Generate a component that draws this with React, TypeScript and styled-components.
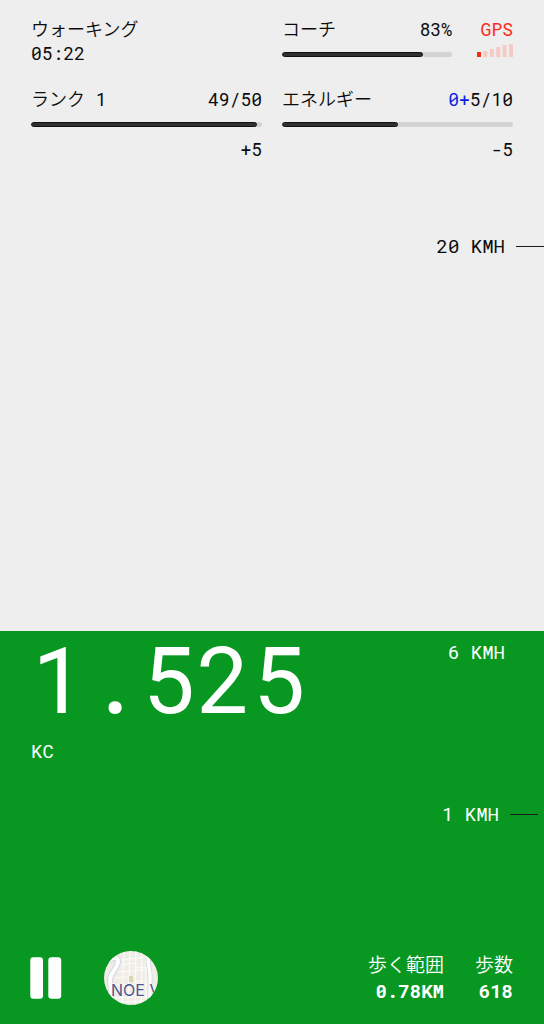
import React from 'react';
import styled, { createGlobalStyle } from 'styled-components';

const mono = "'Roboto Mono', 'DejaVu Sans Mono', 'Noto Sans CJK JP', monospace";

const GlobalStyle = createGlobalStyle`
  *, *::before, *::after { box-sizing: border-box; }
  body {
    margin: 0;
    background: #eeeeee;
    color: #0c0c0c;
    font-family: ${mono};
    font-size: 18px;
    line-height: 24px;
  }
`;

const Screen = styled.main`
  display: flex;
  flex-direction: column;
  min-height: 100vh;
`;

const Upper = styled.section`
  flex: 631 0 0;
  display: flex;
  flex-direction: column;
`;

const Stats = styled.header`
  display: grid;
  grid-template-columns: 1fr 1fr;
  column-gap: 20px;
  row-gap: 22px;
  padding: 17px 31px 0;
`;

const Cell = styled.div`
  display: flex;
  flex-direction: column;
  min-width: 0;
`;

const Split = styled.div`
  display: flex;
  gap: 24px;
`;

const Coach = styled(Cell)`
  flex: 1;
`;

const Row = styled.div`
  display: flex;
  justify-content: space-between;
  white-space: pre;
`;

const Label = styled.span`
  font-weight: 350;
`;

const Level = styled.span`
  font-weight: 400;
`;

const Bonus = styled.span`
  color: #0a1fe0;
`;

const Delta = styled.div`
  margin-top: 10px;
  text-align: right;
`;

const Track = styled.div`
  height: 5px;
  margin-top: 11px;
  border-radius: 3px;
  background: #d3d3d5;
  overflow: hidden;
`;

const Fill = styled.div`
  height: 5px;
  border: 1px solid #121212;
  border-radius: 3px;
  background: #303030;
`;

const Gps = styled.div`
  display: flex;
  flex-direction: column;
  align-items: flex-end;
  color: #fb2a1c;

  svg { display: block; margin-top: 2px; }
`;

const Mark = styled.div<{ $top?: number; $end?: number; $light?: boolean }>`
  display: flex;
  align-items: center;
  justify-content: flex-end;
  gap: 11px;
  margin-top: ${(p) => p.$top ?? 0}px;
  padding-right: ${(p) => p.$end ?? 0}px;
  color: ${(p) => (p.$light ? '#ffffff' : '#0c0c0c')};
  font-size: 19px;
  white-space: nowrap;
`;

const Tick = styled.span`
  width: 28px;
  height: 1px;
  background: #1a1a1a;
`;

const Lower = styled.section`
  flex: 393 0 0;
  display: flex;
  flex-direction: column;
  justify-content: space-between;
  background: #089821;
  color: #ffffff;
  font-size: 19px;
`;

const Reading = styled.div`
  display: flex;
  justify-content: space-between;
  padding: 9px 0 0 31px;
`;

const Energy = styled.div`
  display: flex;
  flex-direction: column;
`;

const Big = styled.strong`
  font-size: 92px;
  line-height: 76px;
  font-weight: 400;
`;

const Unit = styled.span`
  margin-top: 23px;
`;

const Footer = styled.footer`
  display: flex;
  align-items: center;
  padding: 0 31px 19px 30px;
`;

const IconButton = styled.button`
  display: block;
  padding: 0;
  border: 0;
  background: none;
  cursor: pointer;

  svg { display: block; }
  & + & { margin-left: 42px; }
`;

const Totals = styled.dl`
  display: flex;
  gap: 31px;
  margin: 0 0 0 auto;
  text-align: right;

  dt { font-weight: 350; line-height: 26px; }
  dd { margin: 0; font-weight: 700; line-height: 26px; }
`;

function Bar({ value, label }: { value: number; label: string }) {
  return (
    <Track role="progressbar" aria-label={label} aria-valuenow={value}>
      <Fill style={{ width: `${value}%` }} />
    </Track>
  );
}

function Signal() {
  const bars = [5, 6, 8, 10, 12, 13];
  return (
    <svg width="37" height="14" viewBox="0 0 37 14" aria-hidden="true">
      {bars.map((h, i) => (
        <rect key={i} x={1 + i * 6.4} y={14 - h} width="4" height={h} fill={i === 0 ? '#fb2a10' : '#f4cbc4'} />
      ))}
    </svg>
  );
}

function PauseIcon() {
  return (
    <svg width="32" height="42" viewBox="0 0 32 42" aria-hidden="true">
      <rect x="0.3" y="0.3" width="12.7" height="41.4" rx="3" fill="#fff" />
      <rect x="18.3" y="0.3" width="12.9" height="41.4" rx="3" fill="#fff" />
    </svg>
  );
}

function MapIcon() {
  const leftRoad = 'M4 11C8 6 14 5 14 10 14 17 7 21 6 28L8 56';
  const rightRoad = 'M43 0 46 24 46 56';
  return (
    <svg width="54" height="54" viewBox="0 0 54 54" aria-hidden="true">
      <defs>
        <clipPath id="round"><circle cx="27" cy="27" r="27" /></clipPath>
      </defs>
      <g clipPath="url(#round)">
        <rect width="54" height="54" fill="#f0ede6" />
        <g stroke="#fcfbf9" strokeWidth="1.2" fill="none">
          <path d="M20 0 18 54M26 0 24 54M32 0 31 54M38 0 37 54M42 8 42 54" />
          <path d="M15 9 44 6M17 14 32 12M32 17 44 16M14 21 44 19M11 27 31 25M31 31 45 29M9 34 45 33M8 47 54 45M8 51 44 50" />
        </g>
        <rect x="25" y="25" width="4" height="6" fill="#ddd6b2" />
        <g fill="none" strokeLinejoin="round">
          <path d={leftRoad} stroke="#d4d6e6" strokeWidth="6" />
          <path d={leftRoad} stroke="#fdfdfe" strokeWidth="4" />
          <path d={rightRoad} stroke="#d4d6e6" strokeWidth="5" />
          <path d={rightRoad} stroke="#fdfdfe" strokeWidth="3.4" />
        </g>
        <text x="7" y="45" fontFamily="Inter, sans-serif" fontSize="16" fill="#4d558f" stroke="#f6f5f3" strokeWidth="1.5" paintOrder="stroke">
          NOE V
        </text>
      </g>
    </svg>
  );
}

export default function App() {
  return (
    <>
      <GlobalStyle />
      <Screen lang="ja">
        <Upper>
          <Stats>
            <Cell>
              <Label>ウォーキング</Label>
              <time>05:22</time>
            </Cell>
            <Split>
              <Coach>
                <Row><Label>コーチ</Label><span>83%</span></Row>
                <Bar value={83} label="コーチ" />
              </Coach>
              <Gps><span>GPS</span><Signal /></Gps>
            </Split>
            <Cell>
              <Row><Label>ランク <Level>1</Level></Label><span>49/50</span></Row>
              <Bar value={98} label="ランク" />
              <Delta>+5</Delta>
            </Cell>
            <Cell>
              <Row><Label>エネルギー</Label><span><Bonus>0+</Bonus>5/10</span></Row>
              <Bar value={50} label="エネルギー" />
              <Delta>-5</Delta>
            </Cell>
          </Stats>
          <Mark $top={73}>20 KMH<Tick /></Mark>
        </Upper>
        <Lower>
          <Reading>
            <Energy>
              <Big>1.525</Big>
              <Unit>KC</Unit>
            </Energy>
            <div>
              <Mark $light $end={39}>6 KMH</Mark>
              <Mark $light $top={138} $end={6}>1 KMH<Tick /></Mark>
            </div>
          </Reading>
          <Footer>
            <IconButton type="button" aria-label="一時停止"><PauseIcon /></IconButton>
            <IconButton type="button" aria-label="地図"><MapIcon /></IconButton>
            <Totals>
              <div><dt>歩く範囲</dt><dd>0.78KM</dd></div>
              <div><dt>歩数</dt><dd>618</dd></div>
            </Totals>
          </Footer>
        </Lower>
      </Screen>
    </>
  );
}
